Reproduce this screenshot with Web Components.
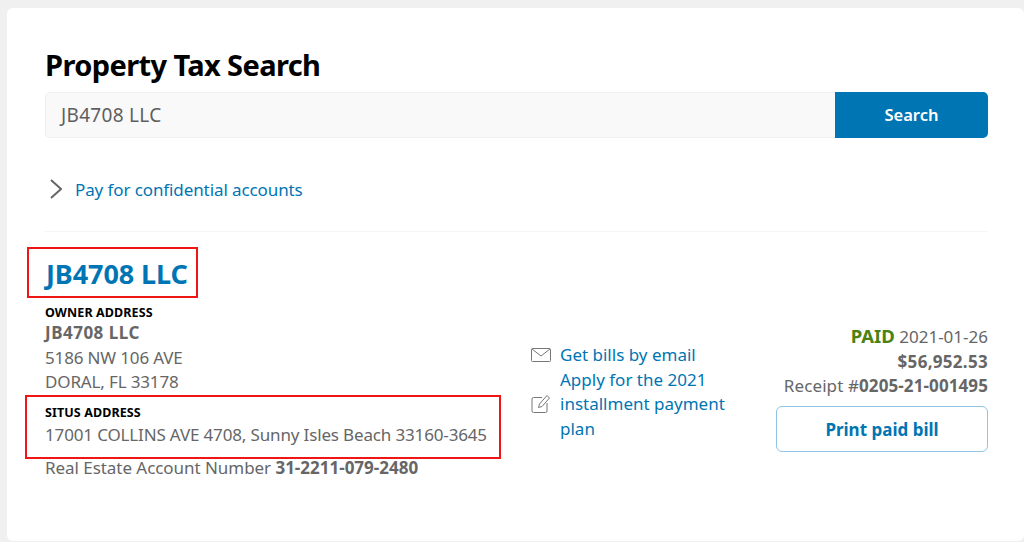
<!DOCTYPE html>
<html>
<head>
<meta charset="utf-8">
<title>Property Tax Search</title>
<style>
  html, body { margin: 0; height: 100%; }
  body { background: #f0f0f0; font-family: "Noto Sans", "Liberation Sans", sans-serif; color: #666; overflow: hidden; }
</style>
</head>
<body>
<tax-page></tax-page>
<script>
const BLUE = '#0075b3';

class SearchBar extends HTMLElement {
  constructor() {
    super();
    this.attachShadow({ mode: 'open' });
  }

  connectedCallback() {
    this.shadowRoot.innerHTML = `
      <style>
        :host { display: flex; height: 46px; }
        .field {
          flex: 1;
          display: flex;
          align-items: center;
          padding-left: 15px;
          background: #f9f9f9;
          border: 1px solid #f0f0f0;
          border-right: none;
          border-radius: 5px 0 0 5px;
          font-size: 19px;
          color: #5f5f5f;
          letter-spacing: 0.3px;
        }
        .btn {
          width: 153px;
          display: flex;
          align-items: center;
          justify-content: center;
          padding-bottom: 1px;
          box-sizing: border-box;
          background: ${BLUE};
          border-radius: 0 5px 5px 0;
          color: #fff;
          font-size: 16.5px;
          font-weight: 600;
        }
      </style>
      <div class="field">${this.getAttribute('value')}</div>
      <div class="btn">Search</div>
    `;
  }
}

class AddressBlock extends HTMLElement {
  constructor() {
    super();
    this.attachShadow({ mode: 'open' });
  }

  connectedCallback() {
    this.shadowRoot.innerHTML = `
      <style>
        :host { display: block; }
        .label {
          font-size: 12.5px;
          font-weight: 700;
          line-height: 17px;
          color: #000;
          letter-spacing: 0.1px;
        }
        .lines { font-size: 17px; line-height: 24.5px; letter-spacing: -0.15px; color: #666; }
        :host([spaced]) .lines { margin-top: 2px; }
      </style>
      <div class="label">${this.getAttribute('label')}</div>
      <div class="lines"><slot></slot></div>
    `;
  }
}

class BillActions extends HTMLElement {
  constructor() {
    super();
    this.attachShadow({ mode: 'open' });
  }

  connectedCallback() {
    this.shadowRoot.innerHTML = `
      <style>
        :host { display: block; width: 205px; font-size: 17px; line-height: 24.5px; color: ${BLUE}; }
        .row { display: flex; align-items: center; gap: 9px; }
        svg { flex: none; width: 20px; height: 20px; }
      </style>
      <div class="row">
        <svg viewBox="0 0 20 20" fill="none" stroke="#777" stroke-width="1">
          <rect x="0.5" y="3.5" width="19" height="13" rx="1"/>
          <path d="M1 4l9 7 9-7"/>
        </svg>
        <span>Get bills by email</span>
      </div>
      <div class="row">
        <svg viewBox="0 0 20 20" fill="none" stroke="#777" stroke-width="1">
          <path d="M11 3.500H2.500a1.500 1.500 0 0 0-1.500 1.500v12a1.500 1.500 0 0 0 1.500 1.500h12a1.500 1.500 0 0 0 1.500-1.500V9"/>
          <path d="M7.500 13.500l1-3.500 7.500-8.500 2.500 2.500-7.500 8.500z"/>
        </svg>
        <span>Apply for the 2021 installment payment plan</span>
      </div>
    `;
  }
}

class PaidSummary extends HTMLElement {
  constructor() {
    super();
    this.attachShadow({ mode: 'open' });
  }

  connectedCallback() {
    this.shadowRoot.innerHTML = `
      <style>
        :host { display: block; width: 212px; text-align: right; font-size: 17px; line-height: 24.5px; color: #666; }
        b { font-weight: 700; }
        .paid { color: #4b8212; font-size: 18.5px; }
        .amount { letter-spacing: 0.3px; }
        .receipt { letter-spacing: 0.1px; }
        .print {
          box-sizing: border-box;
          height: 46px;
          margin-top: 7px;
          padding-top: 3px;
          display: flex;
          align-items: center;
          justify-content: center;
          border: 1px solid #8fc4e4;
          border-radius: 6px;
          color: ${BLUE};
          font-size: 17px;
          font-weight: 700;
        }
      </style>
      <div><b class="paid">PAID</b> 2021-01-26</div>
      <div><b class="amount">$56,952.53</b></div>
      <div class="receipt">Receipt #<b>0205-21-001495</b></div>
      <div class="print">Print paid bill</div>
    `;
  }
}

class TaxPage extends HTMLElement {
  constructor() {
    super();
    this.attachShadow({ mode: 'open' });
  }

  connectedCallback() {
    this.shadowRoot.innerHTML = `
      <style>
        :host { display: block; box-sizing: border-box; height: 542px; padding: 8px 0 1px 7px; }
        .card {
          position: relative;
          box-sizing: border-box;
          height: 100%;
          padding: 38px 36px 0 38px;
          background: #fff;
          border-radius: 6px;
        }
        h1 { margin: 0 0 8px; font-size: 29px; line-height: 38px; font-weight: 700; color: #000; letter-spacing: -0.6px; }
        .pay {
          display: flex;
          align-items: center;
          gap: 13px;
          height: 24px;
          margin: 39px 0 30px;
          padding-left: 5px;
          font-size: 17px;
          color: ${BLUE};
          letter-spacing: -0.1px;
        }
        .pay svg { width: 12px; height: 20px; flex: none; }
        hr { margin: 0; border: 0; border-top: 1px solid #f5f5f5; }
        .name { margin: 23px 0 11px; padding-left: 1px; font-size: 27px; line-height: 38px; font-weight: 700; color: ${BLUE}; letter-spacing: -0.1px; }
        .result { display: flex; align-items: flex-start; }
        .left { width: 486px; }
        .left address-block + address-block { margin-top: 9px; }
        .left b { font-weight: 700; letter-spacing: 0.5px; }
        .acct { font-size: 17px; line-height: 24.5px; margin-top: 9px; letter-spacing: -0.05px; }
        .acct b { letter-spacing: 0; }
        bill-actions { margin-top: 39px; }
        .spacer { flex: 1; }
        paid-summary { margin-top: 20px; }
        .mark { position: absolute; box-sizing: border-box; border: 2px solid #f01616; }
        .m1 { left: 20px; top: 239px; width: 171px; height: 51px; }
        .m2 { left: 18px; top: 387px; width: 476px; height: 64px; }
      </style>
      <div class="card">
        <h1>Property Tax Search</h1>
        <search-bar value="JB4708 LLC"></search-bar>
        <div class="pay">
          <svg viewBox="0 0 12 20" fill="none" stroke="#666" stroke-width="2"><path d="M1 1l10 9-10 9"/></svg>
          <span>Pay for confidential accounts</span>
        </div>
        <hr>
        <div class="name">JB4708 LLC</div>
        <div class="result">
          <div class="left">
            <address-block label="OWNER ADDRESS"><b>JB4708 LLC</b><br>5186 NW 106 AVE<br>DORAL, FL 33178</address-block>
            <address-block spaced label="SITUS ADDRESS">17001 COLLINS AVE 4708, Sunny Isles Beach 33160-3645</address-block>
            <div class="acct">Real Estate Account Number <b>31-2211-079-2480</b></div>
          </div>
          <bill-actions></bill-actions>
          <div class="spacer"></div>
          <paid-summary></paid-summary>
        </div>
        <div class="mark m1"></div>
        <div class="mark m2"></div>
      </div>
    `;
  }
}

customElements.define('search-bar', SearchBar);
customElements.define('address-block', AddressBlock);
customElements.define('bill-actions', BillActions);
customElements.define('paid-summary', PaidSummary);
customElements.define('tax-page', TaxPage);
</script>
</body>
</html>
